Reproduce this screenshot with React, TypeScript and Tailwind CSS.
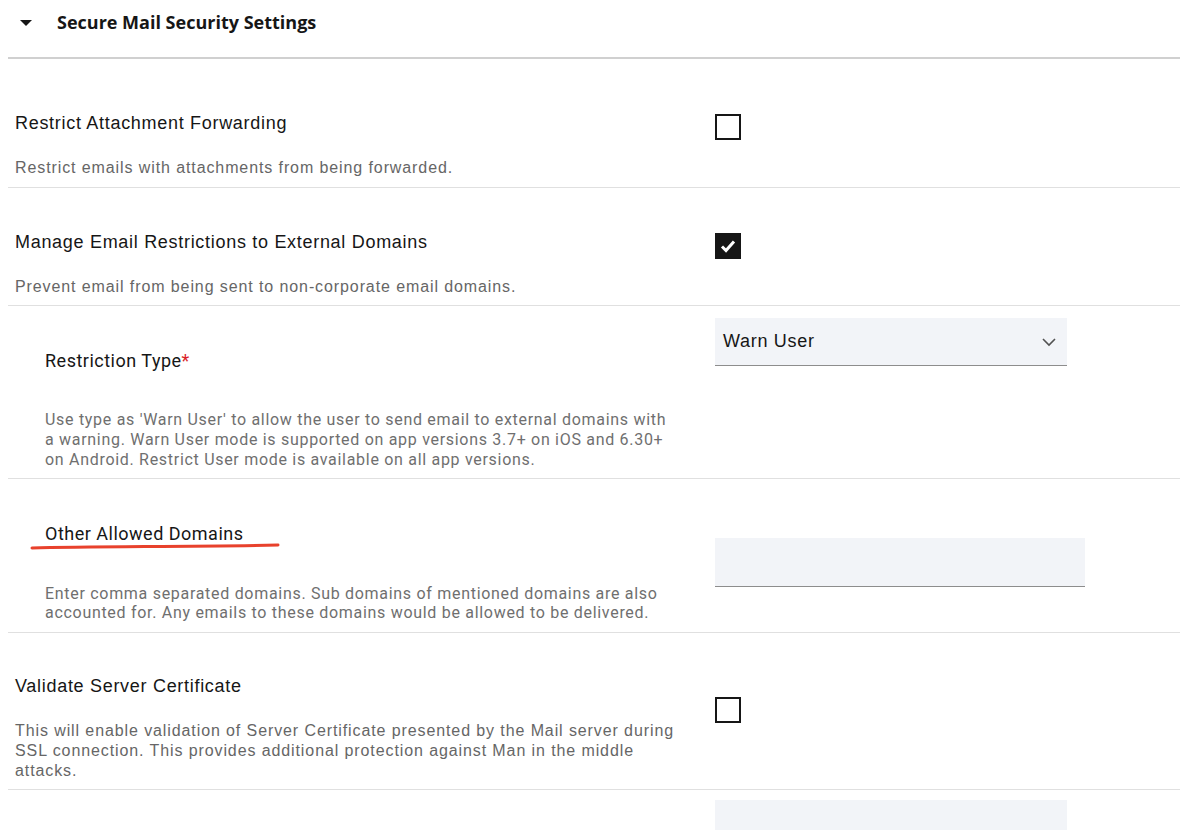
import React from "react";

const arial = { fontFamily: '"Liberation Sans", Arial, sans-serif' };
const plex = { fontFamily: 'Roboto, "Noto Sans", sans-serif' };

function Checkbox({ checked }: { checked?: boolean }) {
  return checked ? (
    <div className="w-[26px] h-[26px] bg-[#161616] flex items-center justify-center">
      <svg width="16" height="14" viewBox="0 0 16 14">
        <path d="M2 7.5l4 4 8-9" fill="none" stroke="white" strokeWidth="3" />
      </svg>
    </div>
  ) : (
    <div className="w-[26px] h-[26px] border-2 border-[#161616] bg-white" />
  );
}

export default function App() {
  return (
    <div className="min-h-screen bg-white pl-2 text-[#161616]">
      {/* header */}
      <div className="h-[59px] flex items-start pt-[10px] border-b-2 border-[#d0d0d0]">
        <svg width="14" height="10" viewBox="0 0 14 10" className="ml-[11px] mt-[8px]">
          <path d="M1 2h12L7 8z" fill="#161616" />
        </svg>
        <span className="ml-[24px] text-[18px] font-bold leading-6" style={{ fontFamily: '"Open Sans", sans-serif' }}>
          Secure Mail Security Settings
        </span>
      </div>

      {/* Restrict Attachment Forwarding */}
      <div className="flex border-b border-[#e0e0e0]">
        <div className="w-[707px] pl-[7px] pt-[52px] pb-[9px]" style={arial}>
          <div className="text-[18px] leading-6 tracking-[0.7px]">Restrict Attachment Forwarding</div>
          <div className="mt-[23px] text-[16px] leading-5 tracking-[0.9px] text-[#666]">Restrict emails with attachments from being forwarded.</div>
        </div>
        <div className="pt-[55px]"><Checkbox /></div>
      </div>

      {/* Manage Email Restrictions */}
      <div className="flex border-b border-[#e0e0e0]">
        <div className="w-[707px] pl-[7px] pt-[42px] pb-[8px]" style={arial}>
          <div className="text-[18px] leading-6 tracking-[0.7px]">Manage Email Restrictions to External Domains</div>
          <div className="mt-[23px] text-[16px] leading-5 tracking-[0.9px] text-[#666]">Prevent email from being sent to non-corporate email domains.</div>
        </div>
        <div className="pt-[45px]"><Checkbox checked /></div>
      </div>

      {/* Restriction Type */}
      <div className="flex border-b border-[#e0e0e0]">
        <div className="w-[707px] pl-[37px] pt-[43px] pb-[8px]" style={plex}>
          <div className="text-[18px] leading-6 tracking-[0.5px]">
            Restriction Type<span className="text-[#da1e28]">*</span>
          </div>
          <div className="mt-[37px] w-[630px] text-[16px] leading-5 tracking-[0.7px] text-[#6f6f6f]">
            Use type as 'Warn User' to allow the user to send email to external domains with a warning. Warn User mode is supported on app versions 3.7+ on iOS and 6.30+ on Android. Restrict User mode is available on all app versions.
          </div>
        </div>
        <div className="pt-[12px]">
          <div className="w-[352px] h-[48px] bg-[#f2f4f8] border-b border-[#8d8d8d] flex items-center justify-between pl-[8px] pr-[10px]" style={arial}>
            <span className="text-[18px] tracking-[0.7px]">Warn User</span>
            <svg width="16" height="10" viewBox="0 0 16 10">
              <path d="M2 2l6 6 6-6" fill="none" stroke="#525252" strokeWidth="1.6" />
            </svg>
          </div>
        </div>
      </div>

      {/* Other Allowed Domains */}
      <div className="flex border-b border-[#e0e0e0]">
        <div className="w-[707px] pl-[37px] pt-[43px] pb-[10px] relative" style={plex}>
          <div className="text-[18px] leading-6 tracking-[0.5px]">Other Allowed Domains</div>
          <svg className="absolute left-[22px] top-[64px]" width="250" height="8" viewBox="0 0 250 8">
            <path d="M2 5 C60 3, 150 4, 248 2" fill="none" stroke="#e8412c" strokeWidth="3" strokeLinecap="round" />
          </svg>
          <div className="mt-[38px] w-[640px] text-[16px] leading-[19px] tracking-[0.7px] text-[#6f6f6f]">
            Enter comma separated domains. Sub domains of mentioned domains are also accounted for. Any emails to these domains would be allowed to be delivered.
          </div>
        </div>
        <div className="pt-[59px]">
          <div className="w-[370px] h-[49px] bg-[#f2f4f8] border-b border-[#8d8d8d]" />
        </div>
      </div>

      {/* Validate Server Certificate */}
      <div className="flex border-b border-[#e0e0e0]">
        <div className="w-[707px] pl-[7px] pt-[41px] pb-[8px]" style={arial}>
          <div className="text-[18px] leading-6 tracking-[0.7px]">Validate Server Certificate</div>
          <div className="mt-[23px] w-[660px] text-[16px] leading-5 tracking-[0.9px] text-[#666]">
            This will enable validation of Server Certificate presented by the Mail server during SSL connection. This provides additional protection against Man in the middle attacks.
          </div>
        </div>
        <div className="pt-[64px]"><Checkbox /></div>
      </div>

      <div className="flex">
        <div className="w-[707px]" />
        <div className="pt-[10px]">
          <div className="w-[352px] h-[40px] bg-[#f2f4f8]" />
        </div>
      </div>
    </div>
  );
}
